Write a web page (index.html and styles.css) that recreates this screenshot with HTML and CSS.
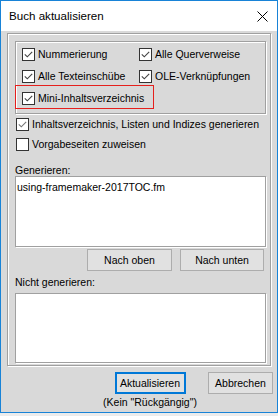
FILE: index.html
```html
<!DOCTYPE html>
<html lang="de">
<head>
<meta charset="utf-8">
<title>Buch aktualisieren</title>
<link rel="stylesheet" href="styles.css">
</head>
<body>
<div class="window">
  <div class="titlebar">
    <span class="title">Buch aktualisieren</span>
    <svg class="close" width="11" height="11" viewBox="0 0 11 11"><path d="M0.5 0.5 L10.5 10.5 M10.5 0.5 L0.5 10.5" stroke="#000" stroke-width="1" fill="none"/></svg>
  </div>
  <div class="client">
    <div class="frame">
      <div class="group">
        <div class="cb"><svg class="box" viewBox="0 0 13 13"><rect x="0.5" y="0.5" width="12" height="12" fill="#fff" stroke="#333"/><path d="M2.8 6.3 L5.3 8.8 L10.2 3.8" stroke="#444" stroke-width="1.15" fill="none"/></svg><span>Nummerierung</span></div>
        <div class="cb"><svg class="box" viewBox="0 0 13 13"><rect x="0.5" y="0.5" width="12" height="12" fill="#fff" stroke="#333"/><path d="M2.8 6.3 L5.3 8.8 L10.2 3.8" stroke="#444" stroke-width="1.15" fill="none"/></svg><span>Alle Querverweise</span></div>
        <div class="cb"><svg class="box" viewBox="0 0 13 13"><rect x="0.5" y="0.5" width="12" height="12" fill="#fff" stroke="#333"/><path d="M2.8 6.3 L5.3 8.8 L10.2 3.8" stroke="#444" stroke-width="1.15" fill="none"/></svg><span>Alle Texteinschübe</span></div>
        <div class="cb"><svg class="box" viewBox="0 0 13 13"><rect x="0.5" y="0.5" width="12" height="12" fill="#fff" stroke="#333"/><path d="M2.8 6.3 L5.3 8.8 L10.2 3.8" stroke="#444" stroke-width="1.15" fill="none"/></svg><span>OLE-Verknüpfungen</span></div>
        <div class="cb"><svg class="box" viewBox="0 0 13 13"><rect x="0.5" y="0.5" width="12" height="12" fill="#fff" stroke="#333"/><path d="M2.8 6.3 L5.3 8.8 L10.2 3.8" stroke="#444" stroke-width="1.15" fill="none"/></svg><span>Mini-Inhaltsverzeichnis</span></div>
        <div class="highlight"></div>
      </div>
      <div class="cb row"><svg class="box" viewBox="0 0 13 13"><rect x="0.5" y="0.5" width="12" height="12" fill="#fff" stroke="#333"/><path d="M2.8 6.3 L5.3 8.8 L10.2 3.8" stroke="#777" stroke-width="1.15" fill="none"/></svg><span>Inhaltsverzeichnis, Listen und Indizes generieren</span></div>
      <div class="cb row"><svg class="box" viewBox="0 0 13 13"><rect x="0.5" y="0.5" width="12" height="12" fill="#fff" stroke="#333"/></svg><span>Vorgabeseiten zuweisen</span></div>
      <div class="label label-gen">Generieren:</div>
      <div class="listbox list-gen"><div class="item">using-framemaker-2017TOC.fm</div></div>
      <div class="btnrow">
        <button class="btn btn-up">Nach oben</button>
        <button class="btn btn-down">Nach unten</button>
      </div>
      <div class="label label-nogen">Nicht generieren:</div>
      <div class="listbox list-nogen"></div>
    </div>
    <div class="footer">
      <div class="primary">
        <button class="btn btn-default">Aktualisieren</button>
        <div class="note">(Kein "Rückgängig")</div>
      </div>
      <button class="btn btn-cancel">Abbrechen</button>
    </div>
  </div>
</div>
</body>
</html>
```
FILE: styles.css
```css
html, body {
  margin: 0;
  padding: 0;
}
body {
  background: #ececec;
  font-family: "Liberation Sans", Arial, sans-serif;
  font-size: 10.5px;
  color: #000;
}
.window {
  width: 278px;
  height: 413px;
  box-sizing: border-box;
  border: 1px solid #1883d7;
  display: flex;
  flex-direction: column;
  background: #d9d9d9;
}
.titlebar {
  height: 30px;
  flex: none;
  background: #fff;
  display: flex;
  align-items: center;
  justify-content: space-between;
  padding: 0 9px 0 8px;
}
.title {
  font-size: 11.6px;
  line-height: 14px;
}
.close {
  display: block;
}
.client {
  flex: 1;
  background: #d9d9d9;
  padding: 2px 6px 0;
  display: flex;
  flex-direction: column;
}
.frame {
  height: 333px;
  box-sizing: border-box;
  border: 1px solid #a0a0a0;
  box-shadow: inset 1px 1px 0 #fff, 1px 1px 0 #fff;
  padding: 7px 4px 2px 7px;
  display: flex;
  flex-direction: column;
}
.group {
  position: relative;
  height: 73px;
  flex: none;
  box-sizing: border-box;
  border: 1px solid #a0a0a0;
  box-shadow: inset 1px 1px 0 #fff, 1px 1px 0 #fff;
  padding: 1px 0 0 6px;
  display: grid;
  grid-template-columns: 117px auto;
  grid-auto-rows: 22px;
  align-content: start;
}
.cb {
  display: flex;
  align-items: center;
  gap: 3px;
  line-height: 12px;
  white-space: nowrap;
}
.box {
  width: 13px;
  height: 13px;
  flex: none;
  display: block;
}
.highlight {
  position: absolute;
  left: -1px;
  top: 43px;
  width: 139px;
  height: 24px;
  box-sizing: border-box;
  border: 1px solid #e5201d;
}
.row {
  height: 20px;
  flex: none;
  padding-left: 1px;
}
.label {
  height: 22px;
  flex: none;
  box-sizing: border-box;
  line-height: 12px;
}
.label-gen {
  padding-top: 10px;
}
.label-nogen {
  padding-top: 5px;
}
.listbox {
  background: #fff;
  border: 1px solid #a0a0a0;
  box-shadow: 1px 1px 0 #fff;
  box-sizing: border-box;
  flex: none;
}
.list-gen {
  height: 71px;
  padding: 4px 1px;
}
.list-nogen {
  height: 70px;
}
.item {
  line-height: 13px;
  white-space: nowrap;
}
.btnrow {
  display: flex;
  justify-content: flex-end;
  gap: 8px;
  margin-top: 2px;
  padding-right: 2px;
  flex: none;
}
.btn {
  height: 22px;
  box-sizing: border-box;
  background: #e1e1e1;
  border: 1px solid #adadad;
  font-family: inherit;
  font-size: 10.5px;
  color: #000;
  padding: 0;
  margin: 0;
  line-height: 12px;
}
.btn-up {
  width: 85px;
}
.btn-down {
  width: 84px;
}
.footer {
  display: flex;
  justify-content: flex-end;
  align-items: flex-start;
  gap: 8px;
  margin-top: 6px;
  margin-right: -2px;
}
.primary {
  width: 100px;
  display: flex;
  flex-direction: column;
  align-items: center;
}
.btn-default {
  width: 71px;
  border: 2px solid #0078d7;
}
.btn-cancel {
  width: 65px;
}
.note {
  margin-top: 2px;
  line-height: 12px;
  white-space: nowrap;
}
```
